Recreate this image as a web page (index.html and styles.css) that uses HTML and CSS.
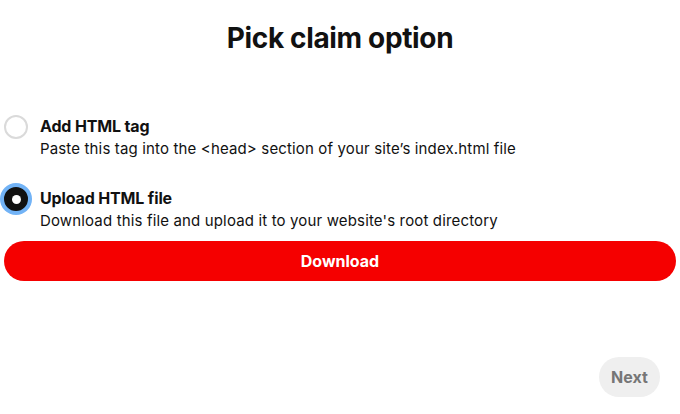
FILE: index.html
```html
<!DOCTYPE html>
<html lang="en">
<head>
<meta charset="utf-8">
<title>Pick claim option</title>
<link rel="stylesheet" href="styles.css">
</head>
<body>
<div class="page">
  <main class="main">
    <h1 class="title">Pick claim option</h1>
    <div class="options">
      <label class="option">
        <span class="radio"></span>
        <span class="text">
          <span class="opt-title">Add HTML tag</span>
          <span class="opt-desc">Paste this tag into the &lt;head&gt; section of your site’s index.html file</span>
        </span>
      </label>
      <label class="option">
        <span class="radio radio-checked"><span class="dot"></span></span>
        <span class="text">
          <span class="opt-title">Upload HTML file</span>
          <span class="opt-desc">Download this file and upload it to your website's root directory</span>
        </span>
      </label>
    </div>
    <button class="download" type="button">Download</button>
  </main>
  <footer class="footer">
    <button class="next" type="button">Next</button>
  </footer>
</div>
</body>
</html>
```
FILE: styles.css
```css
html, body {
  margin: 0;
  padding: 0;
  background: #fff;
}
body {
  font-family: Inter, "Liberation Sans", sans-serif;
  color: #111;
}
.page {
  height: 414px;
  display: flex;
  flex-direction: column;
  box-sizing: border-box;
}
.main {
  padding: 0 4px;
  display: flex;
  flex-direction: column;
}
.title {
  margin: 18px 0 0;
  font-size: 28px;
  line-height: 40px;
  font-weight: 700;
  text-align: center;
  letter-spacing: -0.35px;
}
.options {
  margin-top: 57px;
  display: flex;
  flex-direction: column;
  gap: 26px;
}
.option {
  display: flex;
  align-items: flex-start;
  gap: 12px;
}
.radio {
  width: 24px;
  height: 24px;
  box-sizing: border-box;
  border: 2px solid #dadada;
  border-radius: 50%;
  flex: none;
  display: flex;
  align-items: center;
  justify-content: center;
}
.radio-checked {
  background: #111;
  border-color: #111;
  box-shadow: 0 0 0 4px #72b3f6;
}
.dot {
  width: 9px;
  height: 9px;
  border-radius: 50%;
  background: #fff;
}
.text {
  display: flex;
  flex-direction: column;
}
.opt-title {
  font-size: 16px;
  line-height: 22px;
  font-weight: 700;
  letter-spacing: -0.15px;
}
.opt-desc {
  font-size: 15px;
  line-height: 24px;
  font-weight: 400;
  letter-spacing: 0.15px;
}
.download {
  margin-top: 8px;
  height: 40px;
  border: none;
  border-radius: 20px;
  background: #f50000;
  color: #fff;
  font-family: inherit;
  font-size: 16px;
  font-weight: 700;
}
.footer {
  margin-top: auto;
  display: flex;
  justify-content: flex-end;
  padding: 0 20px 17px 0;
}
.next {
  height: 40px;
  width: 61px;
  border: none;
  border-radius: 20px;
  background: #efefef;
  color: #767676;
  font-family: inherit;
  font-size: 16px;
  font-weight: 700;
}
```
